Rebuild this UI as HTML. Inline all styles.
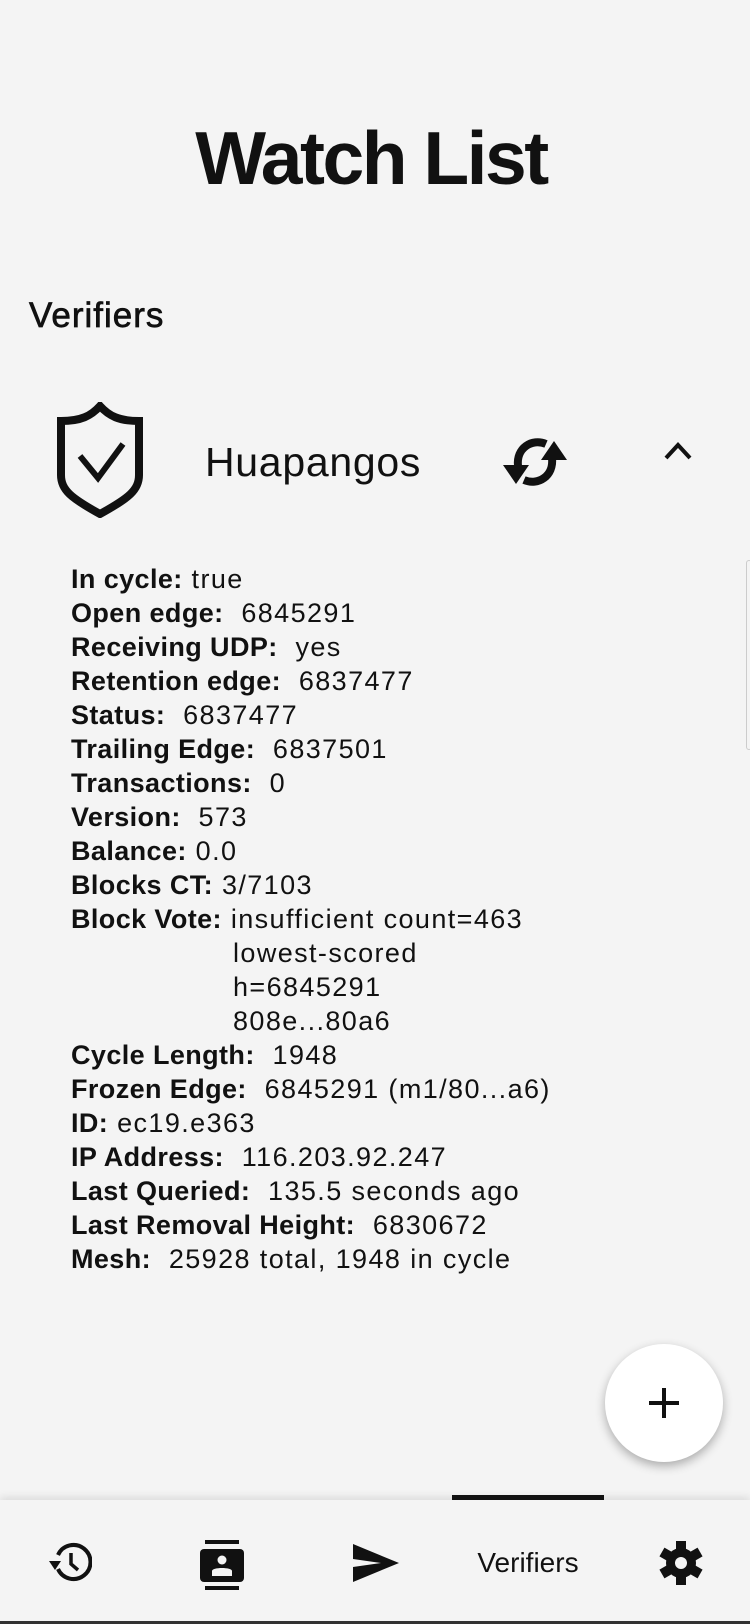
<!DOCTYPE html>
<html><head><meta charset="utf-8"><style>
*{margin:0;padding:0;box-sizing:border-box}
body{width:750px;height:1624px;background:#f4f4f4;font-family:"Liberation Sans",Roboto,sans-serif;color:#111;position:relative;overflow:hidden}
.abs{position:absolute}
h1{position:absolute;left:0;width:742px;top:108px;text-align:center;font-size:75px;font-weight:bold;letter-spacing:-2.5px;line-height:100px}
.h2{left:29px;top:296px;font-size:35px;line-height:40px;letter-spacing:1px;-webkit-text-stroke:0.7px #111}
.name{left:205px;top:438px;font-size:41px;line-height:48px;letter-spacing:0.7px}
.details{left:71px;top:562px;font-size:27px;line-height:34px;white-space:pre;letter-spacing:1.4px}
.details b{font-weight:bold;letter-spacing:0.4px}
.fab{left:605px;top:1344px;width:118px;height:118px;border-radius:50%;background:#fff;box-shadow:0 4px 10px rgba(0,0,0,.3)}
.nav{left:0;top:1500px;width:750px;height:124px;background:#f4f4f4;box-shadow:0 -3px 8px rgba(0,0,0,.1)}
.ind{left:452px;top:1495px;width:152px;height:5px;background:#111}
</style></head><body>
<h1>Watch List</h1>
<div class="abs h2">Verifiers</div>
<svg class="abs" style="left:55px;top:402px" width="90" height="116" viewBox="0 0 90 116">
<path d="M45 4 C36 14 26 19 6 19 V73 C6 88 16 96 45 112 C74 96 84 88 84 73 V19 C64 19 54 14 45 4Z" fill="none" stroke="#111" stroke-width="8" stroke-linejoin="miter"/>
<path d="M25 54 L43 76 L68 42" fill="none" stroke="#111" stroke-width="6"/>
</svg>
<div class="abs name">Huapangos</div>
<svg class="abs" style="left:500px;top:432px" width="70" height="60" viewBox="0 0 70 60">
<path d="M18 34 C16 16 32 6 46 12" fill="none" stroke="#111" stroke-width="8"/>
<path d="M52 26 C54 44 38 54 24 48" fill="none" stroke="#111" stroke-width="8"/>
<path d="M3 33 L29 33 L16 52Z" fill="#111"/>
<path d="M41 28 L67 28 L54 9Z" fill="#111"/>
</svg>
<svg class="abs" style="left:662px;top:440px" width="32" height="22" viewBox="0 0 32 22"><path d="M4 18 L16 5 L28 18" fill="none" stroke="#111" stroke-width="4"/></svg>
<div class="abs details"><b>In cycle:</b> true
<b>Open edge:</b>  6845291
<b>Receiving UDP:</b>  yes
<b>Retention edge:</b>  6837477
<b>Status:</b>  6837477
<b>Trailing Edge:</b>  6837501
<b>Transactions:</b>  0
<b>Version:</b>  573
<b>Balance:</b> 0.0
<b>Blocks CT:</b> 3/7103
<b>Block Vote:</b> insufficient count=463
<span style="padding-left:162px">lowest-scored</span>
<span style="padding-left:162px">h=6845291</span>
<span style="padding-left:162px">808e...80a6</span>
<b>Cycle Length:</b>  1948
<b>Frozen Edge:</b>  6845291 (m1/80...a6)
<b>ID:</b> ec19.e363
<b>IP Address:</b>  116.203.92.247
<b>Last Queried:</b>  135.5 seconds ago
<b>Last Removal Height:</b>  6830672
<b>Mesh:</b>  25928 total, 1948 in cycle</div>
<div class="abs" style="left:746px;top:560px;width:6px;height:190px;border-radius:6px;border:1px solid #ccc"></div>
<div class="abs fab"><svg width="118" height="118" viewBox="0 0 118 118"><path d="M59 44V74M44 59H74" stroke="#111" stroke-width="4"/></svg></div>
<div class="abs nav"></div>
<div class="abs ind"></div>
<svg class="abs" style="left:46px;top:1541px" width="46" height="44" viewBox="0 0 46 44">
<path d="M12 28 A17 17 0 1 0 12 14" fill="none" stroke="#111" stroke-width="4"/>
<path d="M3 20 L15 20 L9 29Z" fill="#111"/>
<path d="M25 12 V23 L32 29" fill="none" stroke="#111" stroke-width="3.5"/>
</svg>
<svg class="abs" style="left:200px;top:1540px" width="44" height="50" viewBox="0 0 44 50">
<rect x="5" y="0" width="34" height="4" fill="#111"/>
<rect x="5" y="46" width="34" height="4" fill="#111"/>
<rect x="0" y="9" width="44" height="33" rx="4" fill="#111"/>
<circle cx="22" cy="20" r="4.5" fill="#f4f4f4"/>
<path d="M12 36 V31 C12 27 32 27 32 31 V36Z" fill="#f4f4f4"/>
</svg>
<svg class="abs" style="left:353px;top:1544px" width="46" height="38" viewBox="0 0 46 38"><path d="M0 0 L46 19 L0 38 L0 23 L28 19 L0 15Z" fill="#111"/></svg>
<div class="abs" style="left:452px;top:1544px;width:152px;text-align:center;font-size:28px;line-height:38px">Verifiers</div>
<svg class="abs" style="left:659px;top:1540px" width="44" height="46" viewBox="-22 -23 44 46">
<g fill="#111"><circle r="15"/>
<g id="t"><rect x="-5" y="-22" width="10" height="10"/></g>
<use href="#t" transform="rotate(60)"/><use href="#t" transform="rotate(120)"/><use href="#t" transform="rotate(180)"/><use href="#t" transform="rotate(240)"/><use href="#t" transform="rotate(300)"/></g>
<circle r="6" fill="#f4f4f4"/></svg>
<div class="abs" style="left:0;top:1621px;width:750px;height:3px;background:#333"></div>
</body></html>
